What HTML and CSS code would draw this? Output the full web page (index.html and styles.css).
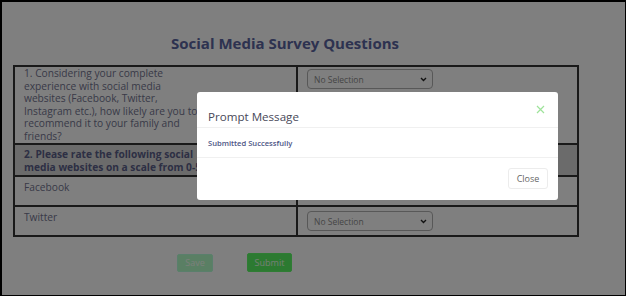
FILE: index.html
```html
<!DOCTYPE html>
<html lang="en">
<head>
    <meta charset="UTF-8">
    <meta name="viewport" content="width=device-width, initial-scale=1.0">
    <title>Social Media Survey</title>
    <link rel="stylesheet" href="styles.css">
</head>
<body>
    <div class="page">
        <h1 class="title">Social Media Survey Questions</h1>
        <div class="survey">
            <div class="cell label q1">1. Considering your complete<br>experience with social media<br>websites (Facebook, Twitter,<br>Instagram etc.), how likely are you to<br>recommend it to your family and<br>friends?</div>
            <div class="cell answer">
                <div class="select"><span>No Selection</span>
                    <svg width="7" height="5" viewBox="0 0 7 5"><path d="M1 1l2.5 2.5L6 1" fill="none" stroke="#222" stroke-width="1.4"/></svg>
                </div>
            </div>
            <div class="cell label group">2. Please rate the following social<br>media websites on a scale from 0-5</div>
            <div class="cell answer group"></div>
            <div class="cell label">Facebook</div>
            <div class="cell answer">
                <div class="select"><span>No Selection</span>
                    <svg width="7" height="5" viewBox="0 0 7 5"><path d="M1 1l2.5 2.5L6 1" fill="none" stroke="#222" stroke-width="1.4"/></svg>
                </div>
            </div>
            <div class="cell label last">Twitter</div>
            <div class="cell answer last">
                <div class="select"><span>No Selection</span>
                    <svg width="7" height="5" viewBox="0 0 7 5"><path d="M1 1l2.5 2.5L6 1" fill="none" stroke="#222" stroke-width="1.4"/></svg>
                </div>
            </div>
        </div>
        <div class="actions">
            <button class="btn btn-save">Save</button>
            <button class="btn btn-submit">Submit</button>
        </div>

        <div class="overlay"></div>
        <div class="modal">
            <div class="modal-header">
                <span class="modal-title">Prompt Message</span>
                <svg class="modal-x" width="9" height="9" viewBox="0 0 9 9"><path d="M1 1l7 7M8 1L1 8" stroke="#9ee39a" stroke-width="1.2"/></svg>
            </div>
            <div class="modal-body">Submitted Successfully</div>
            <div class="modal-footer">
                <button class="close-btn">Close</button>
            </div>
        </div>
    </div>
</body>
</html>
```

FILE: styles.css
```css
body {
    margin: 0;
    font-family: 'Open Sans', sans-serif;
}
.page {
    position: relative;
    width: 626px;
    height: 296px;
    box-sizing: border-box;
    border-top: 2px solid #000;
    border-left: 2px solid #000;
    border-right: 1px solid #000;
    border-bottom: 1px solid #000;
    background: #fff;
    overflow: hidden;
}
.title {
    width: 544px;
    margin: 31px 0 0 11px;
    text-align: center;
    font-size: 15px;
    line-height: 20px;
    font-weight: 700;
    color: #5a64a0;
}
.survey {
    margin: 12px 0 0 11px;
    width: 566px;
    box-sizing: border-box;
    border: 2px solid #333;
    display: grid;
    grid-template-columns: 283px 1fr;
    grid-template-rows: 78px 32px 30px 28px;
}
.cell {
    box-sizing: border-box;
    border-bottom: 2px solid #333;
    overflow: hidden;
}
.cell.last {
    border-bottom: none;
}
.label {
    border-right: 2px solid #333;
    padding: 4px 9px 0;
    font-size: 10.2px;
    line-height: 12.5px;
    color: #727490;
}
.label.q1 {
    padding-top: 0;
}
.label.group {
    padding-top: 3px;
    font-weight: 700;
    color: #5a5e88;
}
.group {
    background: #d6d6d6;
}
.answer {
    padding: 2px 0 0 9px;
}
.answer.last {
    padding-top: 4px;
}
.select {
    width: 126px;
    height: 20px;
    box-sizing: border-box;
    border: 1px solid #b0b0b0;
    border-radius: 4px;
    display: flex;
    align-items: center;
    justify-content: space-between;
    padding: 0 5px 0 6px;
    font-size: 8.5px;
    color: #8c8c8c;
}
.actions {
    display: flex;
    gap: 34px;
    padding-left: 175px;
    margin-top: 16px;
    align-items: center;
}
.btn {
    font-family: 'Open Sans', sans-serif;
    font-size: 9px;
    border-radius: 2px;
    padding: 0;
}
.btn-save {
    width: 36px;
    height: 18px;
    background: #b4ffc8;
    border: 1px solid #b4ffd8;
    color: #f4fff6;
}
.btn-submit {
    width: 45px;
    height: 19px;
    background: #58f462;
    border: 1px solid #5ef868;
    color: #e8ffe8;
}
.overlay {
    position: absolute;
    inset: 0;
    background: rgba(0, 0, 0, 0.5);
}
.modal {
    position: absolute;
    left: 195px;
    top: 90px;
    width: 361px;
    height: 108px;
    background: #fff;
    border-radius: 3px;
    display: flex;
    flex-direction: column;
}
.modal-header {
    height: 36px;
    box-sizing: border-box;
    border-bottom: 1px solid #f0f0f0;
    display: flex;
    align-items: center;
    justify-content: space-between;
    padding: 4px 13px 0 11px;
}
.modal-title {
    font-size: 11.6px;
    color: #484858;
    padding-top: 9px;
}
.modal-x {
    margin-top: -4px;
}
.modal-body {
    height: 30px;
    box-sizing: border-box;
    border-bottom: 1px solid #f0f0f0;
    padding: 10px 11px 0;
    font-size: 7.6px;
    font-weight: 600;
    color: #4d5585;
}
.modal-footer {
    flex: 1;
    display: flex;
    justify-content: flex-end;
    align-items: flex-start;
    padding: 10px 10px 0 0;
}
.close-btn {
    width: 40px;
    height: 21px;
    background: #fff;
    border: 1px solid #ececec;
    border-radius: 3px;
    font-family: 'Open Sans', sans-serif;
    font-size: 9px;
    color: #666;
    padding: 0;
}
```
